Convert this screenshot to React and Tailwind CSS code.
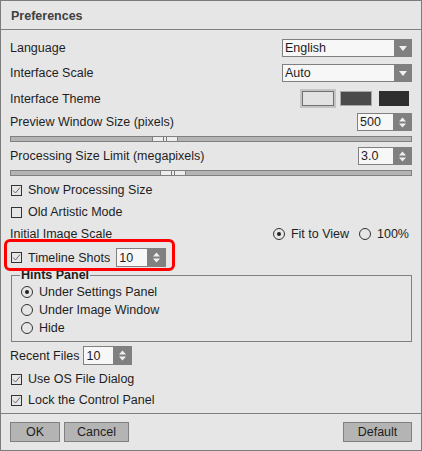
import React from 'react';

const font = { fontFamily: '"Liberation Sans", Arial, sans-serif' };

function Caret() {
  return (
    <svg width="8" height="5" viewBox="0 0 8 5">
      <path d="M0 0h8L4 5z" fill="#f0f0f0" />
    </svg>
  );
}

function SpinArrows() {
  return (
    <svg width="7" height="11" viewBox="0 0 7 11">
      <path d="M0 4.5L3.5 0.5L7 4.5z" fill="#f0f0f0" />
      <path d="M0 6.5L3.5 10.5L7 6.5z" fill="#f0f0f0" />
    </svg>
  );
}

function Dropdown({ value }) {
  return (
    <div className="flex w-[130px] h-[18px] border border-[#808080] bg-[#f7f7f7]">
      <span className="flex-1 pl-[2px] leading-[17px]">{value}</span>
      <span className="w-[17px] bg-[#808080] flex items-center justify-center">
        <Caret />
      </span>
    </div>
  );
}

function Spin({ value, w = 'w-[55px]', h = 'h-[18px]' }) {
  return (
    <div className={`flex ${w} ${h} border border-[#808080] bg-[#f7f7f7]`}>
      <span className="flex-1 pl-[2px] pt-px flex items-center">{value}</span>
      <span className="w-[18px] bg-[#808080] flex items-center justify-center">
        <SpinArrows />
      </span>
    </div>
  );
}

function Slider({ left }) {
  return (
    <div className="relative h-[6px] border border-[#808080] bg-[#b4b4b4]">
      <div className={`absolute top-[-1px] ${left} w-[26px] h-[6px] border border-[#808080] bg-[#ececec] flex items-center justify-center gap-[2px]`}>
        <span className="w-px h-[4px] bg-[#7a7a7a]" />
        <span className="w-px h-[4px] bg-[#7a7a7a]" />
      </div>
    </div>
  );
}

function Check({ checked, children }) {
  return (
    <div className="flex items-center gap-[6px]">
      <span className="w-[11px] h-[11px] ml-px border border-[#333] flex items-center justify-center">
        {checked && (
          <svg width="9" height="9" viewBox="0 0 9 9">
            <path d="M1 4.5L3.5 7L8 1.5" stroke="#6a6a6a" strokeWidth="1" fill="none" />
          </svg>
        )}
      </span>
      <span className="pt-px">{children}</span>
    </div>
  );
}

function Radio({ checked, children }) {
  return (
    <div className="flex items-center gap-[6px]">
      <span className="w-[12px] h-[12px] rounded-full border border-[#333] flex items-center justify-center">
        {checked && <span className="w-[4px] h-[4px] rounded-full bg-[#222]" />}
      </span>
      <span className="pt-px">{children}</span>
    </div>
  );
}

function Button({ children, w }) {
  return (
    <button className={`${w} h-[20px] border border-[#808080] bg-[#b4b4b4] text-[#1e1e1e] leading-[18px]`}>
      {children}
    </button>
  );
}

export default function App() {
  return (
    <div
      style={font}
      className="relative w-[422px] h-[451px] border border-[#7c7c7c] bg-[#e6e6e6] text-[12.5px] text-[#1e1e1e] flex flex-col"
    >
      {/* Titre */}
      <div className="h-[29px] border-b border-[#808080] pl-[10px] pt-[2px] flex items-center font-bold text-[#404040]">
        Preferences
      </div>

      {/* Contenu */}
      <div className="flex-1 flex flex-col pl-[9px] pr-[9px] pt-[9px]">
        <div className="flex items-center justify-between h-[18px]">
          <span className="pt-px">Language</span>
          <Dropdown value="English" />
        </div>
        <div className="flex items-center justify-between h-[18px] mt-[7px]">
          <span className="pt-px">Interface Scale</span>
          <Dropdown value="Auto" />
        </div>
        <div className="flex items-center justify-between h-[19px] mt-[7px]">
          <span className="pt-px">Interface Theme</span>
          <div className="flex items-center">
            <span className="w-[36px] h-[19px] border-2 border-[#c4c4c4] flex">
              <span className="flex-1 border border-[#707070] bg-[#e2e2e2]" />
            </span>
            <span className="w-[32px] h-[15px] ml-[4px] border border-[#a8a8a8] bg-[#4a4a4a]" />
            <span className="w-[30px] h-[15px] ml-[7px] mr-[3px] bg-[#2e2e2e]" />
          </div>
        </div>
        <div className="flex items-center justify-between h-[18px] mt-[5px]">
          <span className="pt-px">Preview Window Size (pixels)</span>
          <Spin value="500" />
        </div>
        <div className="mt-[5px]">
          <Slider left="left-[141px]" />
        </div>
        <div className="flex items-center justify-between h-[18px] mt-[5px]">
          <span className="pt-px">Processing Size Limit (megapixels)</span>
          <Spin value="3.0" w="w-[54px]" />
        </div>
        <div className="mt-[5px]">
          <Slider left="left-[149px]" />
        </div>

        <div className="h-[20px] mt-[4px] flex items-center">
          <Check checked>Show Processing Size</Check>
        </div>
        <div className="h-[20px] mt-[2px] flex items-center">
          <Check>Old Artistic Mode</Check>
        </div>
        <div className="h-[20px] mt-[2px] flex items-center justify-between">
          <span className="pt-px">Initial Image Scale</span>
          <div className="flex items-center gap-[10px] mr-[3px]">
            <Radio checked>Fit to View</Radio>
            <Radio>100%</Radio>
          </div>
        </div>
        <div className="h-[19px] mt-[4px] flex items-center gap-[6px]">
          <Check checked>Timeline Shots</Check>
          <Spin value="10" w="w-[50px]" h="h-[19px]" />
        </div>

        {/* Hints Panel */}
        <div className="relative mt-[8px] ml-px h-[67px] border border-[#808080] pt-[7px] pl-[9px]">
          <span className="absolute top-[-8px] left-[8px] px-px bg-[#e6e6e6] font-bold leading-[15px]">Hints Panel</span>
          <div className="h-[18px] flex items-center">
            <Radio checked>Under Settings Panel</Radio>
          </div>
          <div className="h-[18px] flex items-center">
            <Radio>Under Image Window</Radio>
          </div>
          <div className="h-[18px] flex items-center">
            <Radio>Hide</Radio>
          </div>
        </div>

        <div className="h-[19px] mt-[4px] flex items-center gap-[4px]">
          <span className="pt-px">Recent Files</span>
          <Spin value="10" w="w-[49px]" h="h-[19px]" />
        </div>
        <div className="h-[20px] mt-[4px] flex items-center">
          <Check checked>Use OS File Dialog</Check>
        </div>
        <div className="h-[20px] mt-px flex items-center">
          <Check checked>Lock the Control Panel</Check>
        </div>
      </div>

      {/* Boutons */}
      <div className="h-[37px] border-t border-[#808080] px-[9px] pt-[8px] flex items-start justify-between">
        <div className="flex gap-[4px]">
          <Button w="w-[50px]">OK</Button>
          <Button w="w-[65px]">Cancel</Button>
        </div>
        <Button w="w-[69px]">Default</Button>
      </div>

      {/* Cadre rouge */}
      <div className="absolute left-[3px] top-[238px] w-[171px] h-[32px] border-[3px] border-[#f00] rounded-[6px]" />
    </div>
  );
}
